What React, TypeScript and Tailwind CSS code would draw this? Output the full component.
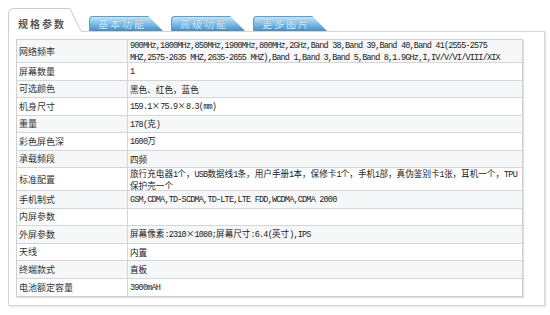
import React from 'react';

type Row = { label: string; lines: string[] };

const rows: Row[] = [
  {
    label: '网络频率',
    lines: [
      '900MHz,1800MHz,850MHz,1900MHz,800MHz,2GHz,Band 38,Band 39,Band 40,Band 41(2555-2575',
      'MHZ,2575-2635 MHZ,2635-2655 MHZ),Band 1,Band 3,Band 5,Band 8,1.9GHz,I,IV/V/VI/VIII/XIX',
    ],
  },
  { label: '屏幕数量', lines: ['1'] },
  { label: '可选颜色', lines: ['黑色、红色，蓝色'] },
  { label: '机身尺寸', lines: ['159.1×75.9×8.3(mm)'] },
  { label: '重量', lines: ['178(克)'] },
  { label: '彩色屏色深', lines: ['1600万'] },
  { label: '承载频段', lines: ['四频'] },
  {
    label: '标准配置',
    lines: ['旅行充电器1个，USB数据线1条，用户手册1本，保修卡1个，手机1部，真伪鉴别卡1张，耳机一个，TPU', '保护壳一个'],
  },
  { label: '手机制式', lines: ['GSM,CDMA,TD-SCDMA,TD-LTE,LTE FDD,WCDMA,CDMA 2000'] },
  { label: '内屏参数', lines: [''] },
  { label: '外屏参数', lines: ['屏幕像素:2310×1080;屏幕尺寸:6.4(英寸),IPS'] },
  { label: '天线', lines: ['内置'] },
  { label: '终端款式', lines: ['直板'] },
  { label: '电池额定容量', lines: ['3900mAH'] },
];

// latin runs are half-width in the source font, so narrow them down
function Mixed({ text }: { text: string }) {
  const parts = text.split(/([\x20-\x7e]+)/).filter(Boolean);
  return (
    <>
      {parts.map((p, i) =>
        /^[\x20-\x7e]+$/.test(p) ? (
          <span key={i} className="font-['Liberation_Mono',monospace] text-[8.5px] tracking-[-0.8px]">
            {p}
          </span>
        ) : (
          <span key={i}>{p}</span>
        )
      )}
    </>
  );
}

function BlueTab({ label }: { label: string }) {
  return (
    <div className="w-[74px] h-[15px] mb-px rounded-tl-[4px] border-t border-l border-[#5e9dca] bg-gradient-to-b from-[#c6e4f6] via-[#80bce4] to-[#428dc4] [clip-path:polygon(0_0,80%_0,100%_100%,0_100%)] flex items-center pl-[8px] text-[10px] tracking-[2px] leading-none text-[#dff2ff] [text-shadow:0_0_1px_#3d82b8]">
      {label}
    </div>
  );
}

export default function SpecTable() {
  return (
    <div className="w-[550px] h-[315px] bg-white font-['Noto_Sans_CJK_SC',sans-serif] text-[#333]">
      <div className="pl-2 pt-2">
        <div className="relative z-10 flex items-end gap-[7px] -mb-px">
          <div className="relative w-[74px] h-[24px] bg-[#cdcdcd] rounded-tl-[6px] [clip-path:polygon(0_0,84%_0,100%_100%,0_100%)]">
            <div className="absolute left-px top-px right-px bottom-0 bg-white rounded-tl-[5px] [clip-path:polygon(0_0,84%_0,100%_100%,0_100%)] flex items-center pl-[9px] pt-[6px]">
              <span className="text-[10px] font-bold tracking-[2px] leading-none text-[#555]">规格参数</span>
            </div>
          </div>
          <BlueTab label="基本功能" />
          <div className="ml-px">
            <BlueTab label="高级功能" />
          </div>
          <div className="ml-px">
            <BlueTab label="更多图片" />
          </div>
        </div>

        <div className="w-[537px] h-[275px] border border-[#d6d6d6] shadow-[1px_1px_2px_rgba(0,0,0,0.12)] pl-[7px] pt-[7px] pr-[21px]">
          <div className="border border-[#d0d0d0] shadow-[1px_1px_1px_rgba(0,0,0,0.12)]">
            {rows.map((row, i) => (
              <div
                key={row.label}
                className={`flex border-b border-[#d6d6d6] last:border-b-0 ${
                  row.lines.length > 1 ? 'h-[23px]' : 'h-[17.5px]'
                } ${i % 2 === 0 ? 'bg-[#f6f7f9]' : 'bg-white'}`}
              >
                <div className="w-[111px] shrink-0 border-r border-[#d6d6d6] pl-[2px] flex items-center text-[9px] leading-none text-[#333]">
                  {row.label}
                </div>
                <div className="flex-1 pl-[2px] flex flex-col justify-center text-[8.6px] leading-[10.5px] text-[#222] whitespace-nowrap">
                  {row.lines.map((line, j) => (
                    <div key={j}>
                      <Mixed text={line} />
                    </div>
                  ))}
                </div>
              </div>
            ))}
          </div>
        </div>
      </div>
    </div>
  );
}
